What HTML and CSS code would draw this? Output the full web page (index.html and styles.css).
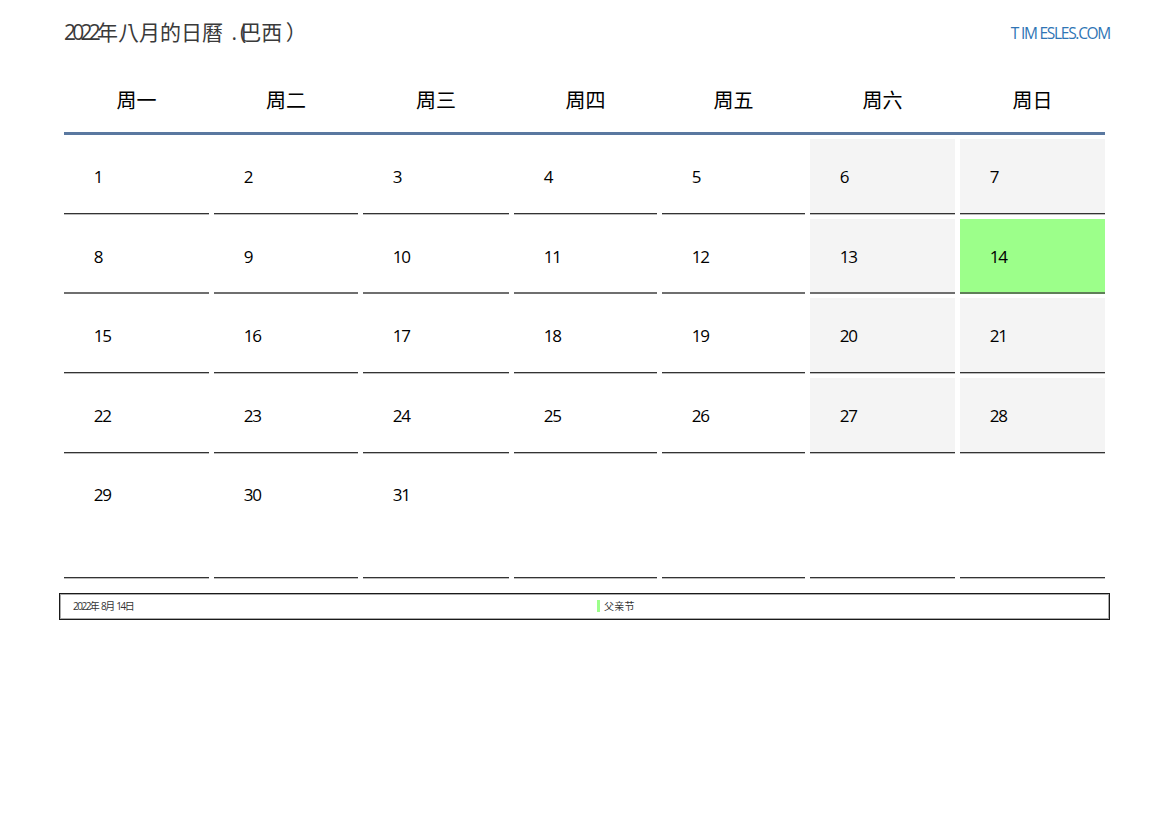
FILE: index.html
```html
<!DOCTYPE html>
<html lang="zh-Hant">
<head>
<meta charset="utf-8">
<title>2022年八月的日曆</title>
<link rel="stylesheet" href="styles.css">
</head>
<body>
<header class="top">
  <h1 class="title"><span class="digits">2022</span>年八月的日曆 <span class="dot">.</span><span class="paren">(</span>巴西 <span class="close">）</span></h1>
  <a class="site"><span class="site-t">T</span><span class="site-im">IM</span>ESLES.COM</a>
</header>
<main class="calendar">
  <div class="heads">
    <div>周一</div><div>周二</div><div>周三</div><div>周四</div><div>周五</div><div>周六</div><div>周日</div>
  </div>
  <div class="rule"></div>
  <div class="days">
    <div class="day">1</div><div class="day">2</div><div class="day">3</div><div class="day">4</div><div class="day">5</div><div class="day we">6</div><div class="day we">7</div>
    <div class="day soft">8</div><div class="day soft">9</div><div class="day soft">10</div><div class="day soft">11</div><div class="day soft">12</div><div class="day soft we">13</div><div class="day soft hol">14</div>
    <div class="day">15</div><div class="day">16</div><div class="day">17</div><div class="day">18</div><div class="day">19</div><div class="day we">20</div><div class="day we">21</div>
    <div class="day">22</div><div class="day">23</div><div class="day">24</div><div class="day">25</div><div class="day">26</div><div class="day we">27</div><div class="day we">28</div>
    <div class="day last">29</div><div class="day last">30</div><div class="day last">31</div><div class="day last"></div><div class="day last"></div><div class="day last"></div><div class="day last"></div>
  </div>
</main>
<footer class="legend">
  <div class="date">2022年 8月 14日</div>
  <div class="event"><span class="mark"></span>父亲节</div>
</footer>
</body>
</html>
```
FILE: styles.css
```css
* { box-sizing: border-box; }
html, body { margin: 0; padding: 0; background: #fff; }
body {
  width: 1169px;
  height: 827px;
  overflow: hidden;
  font-family: "Open Sans", "Noto Sans CJK TC", sans-serif;
  color: #000;
}
.top {
  height: 65px;
  padding: 19px 59px 0 64px;
  display: flex;
  justify-content: space-between;
  align-items: flex-start;
}
.title {
  margin: 0;
  font-size: 21px;
  line-height: 27px;
  font-weight: 400;
  color: #3a3a3a;
}
.digits { letter-spacing: -3.75px; }
.dot { margin-left: 3px; }
.paren { margin-right: -6px; margin-left: 3px; }
.close { margin-left: -2px; }
.site {
  margin-top: 4px;
  font-size: 15.5px;
  line-height: 21px;
  letter-spacing: -1.3px;
  color: #2f75b5;
}
.site-t { margin-right: 3px; }
.site-im { margin-right: 3px; }
.calendar { margin-left: 64px; width: 1041px; }
.heads, .days {
  display: grid;
  grid-template-columns: 145px 144px 146px 143px 143px 145px 145px;
  column-gap: 5px;
}
.heads {
  height: 67px;
  align-items: center;
  text-align: center;
  font-size: 20px;
  line-height: 27px;
  padding-top: 4px;
}
.rule { height: 3px; background: #5a78a0; margin-bottom: 4px; }
.days { grid-template-rows: 80px 79px 80px 80px 120px; }
.day {
  height: 75px;
  padding: 27px 0 0 29.75px;
  font-size: 17px;
  line-height: 22px;
  letter-spacing: -1.3px;
  border-bottom: 1px solid #333;
  box-shadow: 0 1px 0 #bbb;
}
.we { background: #f4f4f4; }
.soft { border-bottom: 2px solid #6f6f6f; box-shadow: none; }
.hol { background: #9cff8a; border-bottom-color: #5f7f58; }
.last { height: 120px; padding-top: 26px; }
.legend {
  margin: 15px 0 0 59px;
  width: 1051px;
  height: 27px;
  border: 1px solid #1a1a1a;
  box-shadow: inset 0 0 0 1px #aaa;
  padding-bottom: 2px;
  display: flex;
  align-items: center;
  font-size: 10px;
  color: #333;
}
.date { width: 537px; padding-left: 13px; letter-spacing: -1.5px; word-spacing: 1.5px; }
.event { display: flex; align-items: center; letter-spacing: 0.2px; }
.mark {
  width: 3px;
  height: 12px;
  margin-right: 4px;
  background: #9cff8a;
}
```
